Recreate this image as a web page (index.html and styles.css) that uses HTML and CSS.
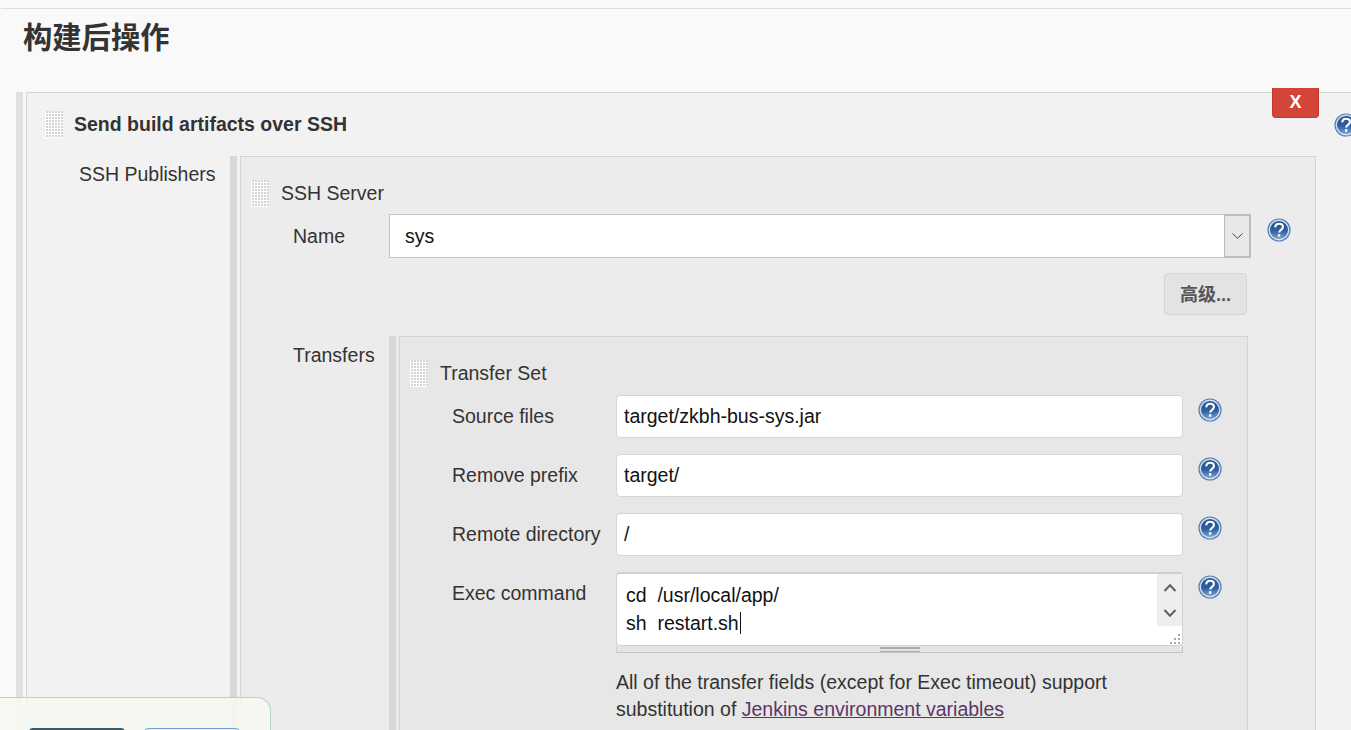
FILE: index.html
```html
<!DOCTYPE html>
<html>
	<head>
		<meta charset="UTF-8">
		<title>构建后操作</title>
		<link rel="stylesheet" href="styles.css">
	</head>
	<body>
		<svg class="defs" width="0" height="0">
			<defs>
				<linearGradient id="helpfill" x1="0" y1="0" x2="0" y2="1">
					<stop offset="0" stop-color="#24518f"/>
					<stop offset="0.55" stop-color="#305f9f"/>
					<stop offset="1" stop-color="#7aa3d0"/>
				</linearGradient>
				<symbol id="help" viewBox="0 0 24 24">
					<circle cx="12" cy="12" r="11.6" fill="#5580b4"/>
					<circle cx="12" cy="12" r="10.4" fill="#d3dfee"/>
					<circle cx="12" cy="12" r="9" fill="url(#helpfill)"/>
					<path d="M8.2 9.300c.2-2.300 1.800-3.500 3.900-3.500 2.200 0 3.800 1.200 3.800 3.100 0 1.500-.9 2.300-1.900 3-1.100.8-1.800 1.300-1.800 2.700" fill="none" stroke="#fff" stroke-width="2.100"/>
					<rect x="10.900" y="16.200" width="2.400" height="2.500" fill="#fff"/>
				</symbol>
			</defs>
		</svg>
		<div class="page">
			<h1 class="heading">构建后操作</h1>
			<div class="section">
				<button class="del">X</button>
				<div class="box outer">
					<div class="titlerow">
						<span class="handle"></span>
						<b class="title">Send build artifacts over SSH</b>
						<svg class="help help-top"><use href="#help"/></svg>
					</div>
					<div class="pubrow">
						<div class="publabel">SSH Publishers</div>
						<div class="nest">
							<div class="box server">
								<div class="head">
									<span class="handle"></span>
									<span>SSH Server</span>
								</div>
								<div class="namerow">
									<label class="lbl">Name</label>
									<div class="select">
										<span class="selval">sys</span>
										<span class="arrow">
											<svg width="11" height="6" viewBox="0 0 11 6"><path d="M.5.500 5.500 5.300 10.500.500" fill="none" stroke="#444" stroke-width="1"/></svg>
										</span>
									</div>
									<svg class="help"><use href="#help"/></svg>
								</div>
								<div class="advrow">
									<button class="adv">高级...</button>
								</div>
								<div class="transrow">
									<div class="translabel">Transfers</div>
									<div class="nest">
										<div class="box transfer">
											<div class="head head2">
												<span class="handle"></span>
												<span>Transfer Set</span>
											</div>
											<div class="row">
												<label class="lbl">Source files</label>
												<input class="txt" value="target/zkbh-bus-sys.jar">
												<svg class="help"><use href="#help"/></svg>
											</div>
											<div class="row">
												<label class="lbl">Remove prefix</label>
												<input class="txt" value="target/">
												<svg class="help"><use href="#help"/></svg>
											</div>
											<div class="row">
												<label class="lbl">Remote directory</label>
												<input class="txt" value="/">
												<svg class="help"><use href="#help"/></svg>
											</div>
											<div class="row execrow">
												<label class="lbl">Exec command</label>
												<div class="exec">
													<div class="area">
														<div class="code">cd&nbsp; /usr/local/app/<br>sh&nbsp; restart.sh<i class="caret"></i></div>
														<div class="scroll">
															<svg width="14" height="9" viewBox="0 0 14 9"><path d="M1.500 8 7 2.200 12.500 8" fill="none" stroke="#606060" stroke-width="2"/></svg>
															<svg width="14" height="9" viewBox="0 0 14 9"><path d="M1.500 1 7 6.800 12.500 1" fill="none" stroke="#606060" stroke-width="2"/></svg>
														</div>
														<svg class="grip" width="12" height="12" viewBox="0 0 12 12"><path d="M9 1h2v2H9zM5 5h2v2H5zM9 5h2v2H9zM1 9h2v2H1zM5 9h2v2H5zM9 9h2v2H9z" fill="#aaa"/></svg>
													</div>
													<div class="resize"><span></span></div>
												</div>
												<svg class="help"><use href="#help"/></svg>
											</div>
											<div class="note">All of the transfer fields (except for Exec timeout) support<br>substitution of <a href="#">Jenkins environment variables</a></div>
										</div>
									</div>
								</div>
							</div>
						</div>
					</div>
				</div>
			</div>
		</div>
		<div class="float">
			<span class="fbtn dark"></span>
			<span class="fbtn blue"></span>
		</div>
	</body>
</html>
```

FILE: styles.css
```css
*{
    margin: 0;
    padding: 0;
    box-sizing: border-box;
}
html,body{
    height: 730px;
    overflow: hidden;
}
body{
    background: #f9f9f9;
    color: #333;
    font-family: "Liberation Sans", "Noto Sans CJK SC", sans-serif;
    font-size: 19.5px;
}
.defs{
    position: absolute;
}
.page{
    margin: 8px 0 0 1px;
    height: 722px;
    overflow: hidden;
    border-top: 1px solid #ddd;
}
.heading{
    margin-left: 22px;
    padding-top: 11px;
    height: 83px;
    font-size: 29.3px;
    line-height: 36px;
    color: #333;
}
.section{
    position: relative;
    margin-left: 15px;
    padding-left: 3px;
    height: 638px;
    border-left: 7px solid #e0e0e0;
}
.del{
    position: absolute;
    left: 1249px;
    top: -4px;
    width: 47px;
    height: 30px;
    background: #d24538;
    border: 1px solid #c43a2e;
    border-top: 0;
    border-radius: 0 0 4px 4px;
    color: #fff;
    font: bold 18px "Liberation Sans", sans-serif;
}
.box{
    border: 1px solid #d3d3d3;
}
.outer{
    background: #f2f2f2;
    width: 1400px;
    height: 700px;
}
.titlerow{
    display: flex;
    align-items: center;
    height: 63px;
    padding: 0 0 0 18px;
}
.handle{
    flex: none;
    width: 18px;
    height: 27px;
    margin-right: 12px;
    background-color: #fff;
    background-image: repeating-linear-gradient(90deg, #fff 0 1px, transparent 1px 3px), repeating-linear-gradient(0deg, #fff 0 1px, #d4d4d4 1px 3px);
}
.titlerow .handle{
    margin-right: 11px;
}
.title{
    font-size: 19.5px;
}
.help{
    flex: none;
    display: block;
    width: 24px;
    height: 24px;
}
.help-top{
    margin-left: 987px;
}
.pubrow{
    display: flex;
}
.publabel{
    width: 203px;
    padding: 5px 0 0 52px;
    line-height: 27px;
}
.nest{
    border-left: 7px solid #d8d8d8;
    padding-left: 3px;
}
.pubrow > .nest{
    width: 1086px;
}
.server{
    background: #ececec;
    height: 600px;
    padding: 0 0 0 10px;
}
.head{
    display: flex;
    align-items: center;
    height: 57px;
    padding-top: 16px;
}
.namerow{
    display: flex;
    align-items: flex-start;
    padding-left: 42px;
}
.lbl{
    display: block;
    line-height: 44px;
    width: 96px;
}
.namerow .help{
    margin: 4px 0 0 16px;
}
.select{
    display: flex;
    width: 862px;
    height: 44px;
    background: #fff;
    border: 1px solid #c4c4c4;
    border-right: 0;
}
.selval{
    flex: 1;
    padding-left: 15px;
    line-height: 42px;
    color: #111;
}
.arrow{
    display: flex;
    align-items: center;
    justify-content: center;
    width: 27px;
    margin: -1px 0;
    background: #e8e8e8;
    border: 2px solid #bbb;
    border-left-width: 1px;
}
.advrow{
    padding: 15px 0 21px 913px;
}
.adv{
    display: block;
    width: 83px;
    height: 42px;
    padding-bottom: 2px;
    background: #e3e3e3;
    border: 1px solid #d4d4d4;
    border-radius: 4px;
    color: #555;
    font: bold 18px "Liberation Sans", "Noto Sans CJK SC", sans-serif;
}
.transrow{
    display: flex;
    padding-left: 42px;
}
.translabel{
    width: 96px;
    line-height: 38px;
}
.transfer{
    width: 849px;
    height: 500px;
    background: #e7e7e7;
    padding-left: 10px;
}
.head2{
    height: 58px;
    padding-top: 15px;
}
.row{
    display: flex;
    align-items: flex-start;
    height: 59px;
    padding-left: 42px;
}
.row .lbl{
    width: 164px;
    line-height: 43px;
}
.row .help{
    margin: 3px 0 0 15px;
}
.txt{
    width: 567px;
    height: 43px;
    padding-left: 7px;
    background: #fff;
    border: 1px solid #d6d6d6;
    border-radius: 4px;
    color: #111;
    font: 19.5px "Liberation Sans", sans-serif;
    outline: 0;
}
.execrow{
    height: 97px;
}
.exec{
    width: 567px;
}
.area{
    position: relative;
    height: 74px;
    background: #fff;
    border: 1px solid #d2d2d2;
    border-top: 2px solid #cfcfcf;
    border-radius: 4px;
}
.code{
    padding: 7px 0 0 9px;
    line-height: 28px;
    color: #111;
}
.caret{
    display: inline-block;
    width: 1px;
    height: 22px;
    margin-left: 1px;
    vertical-align: -4px;
    background: #111;
}
.scroll{
    position: absolute;
    right: 0;
    top: 0;
    display: flex;
    flex-direction: column;
    align-items: center;
    justify-content: space-between;
    width: 25px;
    height: 52px;
    padding: 9px 0 8px;
    background: #eee;
}
.grip{
    position: absolute;
    right: 1px;
    bottom: 0;
}
.resize{
    display: flex;
    justify-content: center;
    height: 7px;
    background: #e4e4e4;
    border-bottom: 1px solid #c4c4c4;
    border-left: 1px solid #d0d0d0;
    border-right: 1px solid #c4c4c4;
}
.resize span{
    width: 40px;
    height: 5px;
    margin-top: 1px;
    border-top: 2px solid #aaa;
    border-bottom: 1px solid #aaa;
}
.note{
    margin-left: 206px;
    line-height: 27px;
}
.note a{
    color: #5c3566;
}
.float{
    position: absolute;
    left: 0;
    top: 697px;
    display: flex;
    gap: 19px;
    width: 271px;
    height: 33px;
    overflow: hidden;
    padding: 30px 0 0 29px;
    background: rgba(244,248,240,.92);
    border: 1px solid #b3d4c4;
    border-left: 0;
    border-bottom: 0;
    border-radius: 0 14px 0 0;
}
.fbtn{
    flex: none;
    width: 96px;
    height: 20px;
    border-radius: 4px;
}
.dark{
    background: #3a5a6a;
}
.blue{
    background: #eef5fb;
    border: 1px solid #6d9fdc;
}
```
